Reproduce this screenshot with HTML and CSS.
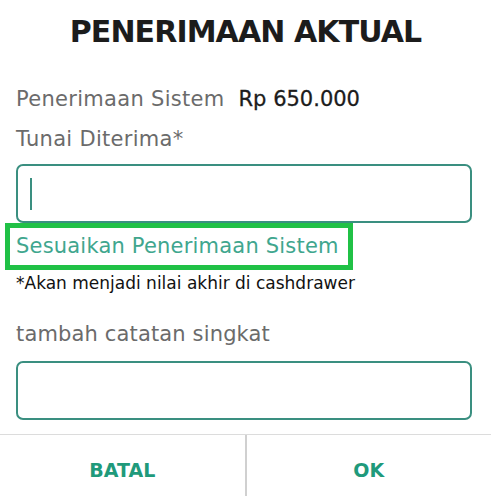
FILE: index.html
```html
<!DOCTYPE html>
<html lang="id">
<head>
  <meta charset="UTF-8">
  <meta name="viewport" content="width=device-width, initial-scale=1.0">
  <title>Penerimaan Aktual</title>
  <link rel="stylesheet" href="styles.css">
</head>
<body>
  <div class="dialog">
    <h1 class="dialog-title">PENERIMAAN AKTUAL</h1>

    <div class="dialog-body">
      <!-- System receipt -->
      <div class="system-row">
        <span class="label">Penerimaan Sistem</span>
        <span class="amount">Rp 650.000</span>
      </div>

      <!-- Cash received -->
      <div class="label cash-label">Tunai Diterima*</div>
      <div class="field">
        <span class="caret"></span>
      </div>

      <a class="adjust-link" href="#">Sesuaikan Penerimaan Sistem</a>
      <div class="hint">*Akan menjadi nilai akhir di cashdrawer</div>

      <!-- Note -->
      <div class="label note-label">tambah catatan singkat</div>
      <div class="field note-field"></div>
    </div>

    <div class="dialog-actions">
      <button class="action-button">BATAL</button>
      <button class="action-button">OK</button>
    </div>
  </div>
</body>
</html>
```

FILE: styles.css
```css
/* Colours */
:root {
  --title: #1c1c1c;
  --label: #6b6b6b;
  --teal: #3a8f80;
  --link: #40a68e;
  --action: #1f9a7b;
  --highlight: #20c146;
  --divider: #dcdcdc;
}

body {
  margin: 0;
  font-family: "DejaVu Sans", "Liberation Sans", sans-serif;
  background: #fff;
  color: var(--title);
}

.dialog {
  width: 491px;
  height: 496px;
  display: flex;
  flex-direction: column;
  overflow: hidden;
}

/* Title */
.dialog-title {
  margin: 0;
  padding-top: 14px;
  font-size: 30px;
  line-height: 36px;
  font-weight: bold;
  letter-spacing: -0.9px;
  text-align: center;
  color: var(--title);
}

.dialog-body {
  padding-top: 36px;
  flex: 1;
}

.label {
  font-size: 21px;
  line-height: 26px;
  letter-spacing: 0.3px;
  color: var(--label);
}

.system-row {
  display: flex;
  gap: 14px;
  padding-left: 16px;
}

.amount {
  font-size: 21px;
  line-height: 26px;
  color: var(--title);
  -webkit-text-stroke: 0.3px var(--title);
}

.cash-label {
  margin-top: 14px;
  padding-left: 16px;
}

/* Input boxes */
.field {
  box-sizing: border-box;
  width: 456px;
  height: 59px;
  margin: 12px 0 0 16px;
  border: 2px solid var(--teal);
  border-radius: 7px;
  padding: 12px 0 0 12px;
}

.caret {
  display: block;
  width: 2px;
  height: 32px;
  background: var(--teal);
}

/* Highlighted link */
.adjust-link {
  display: inline-block;
  margin-left: 5px;
  border: 5px solid var(--highlight);
  padding: 5px 9px 6px 6px;
  font-size: 21px;
  line-height: 26px;
  letter-spacing: 0.2px;
  color: var(--link);
  text-decoration: none;
}

.hint {
  margin-top: 3px;
  padding-left: 16px;
  font-size: 17px;
  line-height: 20px;
  color: #111;
}

.note-label {
  margin-top: 28px;
  padding-left: 16px;
  letter-spacing: 0.15px;
}

.note-field {
  margin-top: 14px;
}

/* Buttons */
.dialog-actions {
  display: flex;
  height: 61px;
  border-top: 1px solid var(--divider);
}

.action-button {
  flex: 1;
  background: none;
  border: none;
  padding: 8px 0 0;
  font-family: inherit;
  font-size: 19px;
  font-weight: bold;
  color: var(--action);
  cursor: pointer;
}

.action-button + .action-button {
  border-left: 2px solid #d0d0d0;
}
```
